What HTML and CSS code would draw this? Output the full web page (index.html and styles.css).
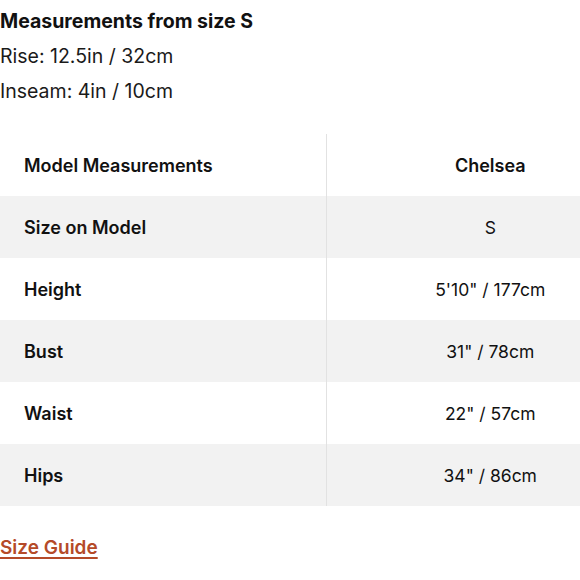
FILE: index.html
```html
<!DOCTYPE html>
<html>
<head>
<meta charset="utf-8">
<link rel="stylesheet" href="styles.css">
</head>
<body>
<div class="page">
  <section class="intro">
    <h2 class="intro-title">Measurements from size S</h2>
    <p class="intro-line">Rise: 12.5in / 32cm</p>
    <p class="intro-line">Inseam: 4in / 10cm</p>
  </section>
  <table class="model-table">
    <tbody>
      <tr class="row"><th class="cell-label">Model Measurements</th><th class="cell-value head">Chelsea</th></tr>
      <tr class="row alt"><td class="cell-label">Size on Model</td><td class="cell-value">S</td></tr>
      <tr class="row"><td class="cell-label">Height</td><td class="cell-value">5'10" / 177cm</td></tr>
      <tr class="row alt"><td class="cell-label">Bust</td><td class="cell-value">31" / 78cm</td></tr>
      <tr class="row"><td class="cell-label">Waist</td><td class="cell-value">22" / 57cm</td></tr>
      <tr class="row alt"><td class="cell-label">Hips</td><td class="cell-value">34" / 86cm</td></tr>
    </tbody>
  </table>
  <a class="size-guide" href="#">Size Guide</a>
</div>
</body>
</html>
```
FILE: styles.css
```css
html, body {
  margin: 0;
  padding: 0;
  background: #fff;
  overflow: hidden;
}
body {
  font-family: Inter, "Liberation Sans", sans-serif;
  color: #111;
}
.page {
  width: 580px;
  height: 580px;
  overflow: hidden;
}
.intro {
  padding-top: 4px;
}
.intro-title {
  margin: 0;
  font-size: 19.5px;
  font-weight: 700;
  line-height: 35px;
}
.intro-line {
  margin: 0;
  font-size: 19.5px;
  font-weight: 400;
  line-height: 35px;
  color: #1a1a1a;
}
.model-table {
  margin-top: 25px;
  border-collapse: collapse;
  width: 654px;
  table-layout: fixed;
}
.row {
  height: 62px;
}
.row.alt {
  background: #f2f2f2;
}
.cell-label {
  width: 326px;
  padding: 0 0 0 24px;
  text-align: left;
  font-size: 18px;
  font-weight: 600;
  border-right: 1px solid #e2e2e2;
  box-sizing: border-box;
}
.cell-value {
  text-align: center;
  font-size: 17.5px;
  font-weight: 400;
  padding: 0;
}
.cell-value.head {
  font-weight: 600;
  font-size: 18px;
}
.size-guide {
  display: inline-block;
  margin-top: 30px;
  font-size: 19px;
  font-weight: 600;
  color: #b54a28;
  text-decoration: underline;
  text-decoration-thickness: 2px;
  text-underline-offset: 3px;
}
```
